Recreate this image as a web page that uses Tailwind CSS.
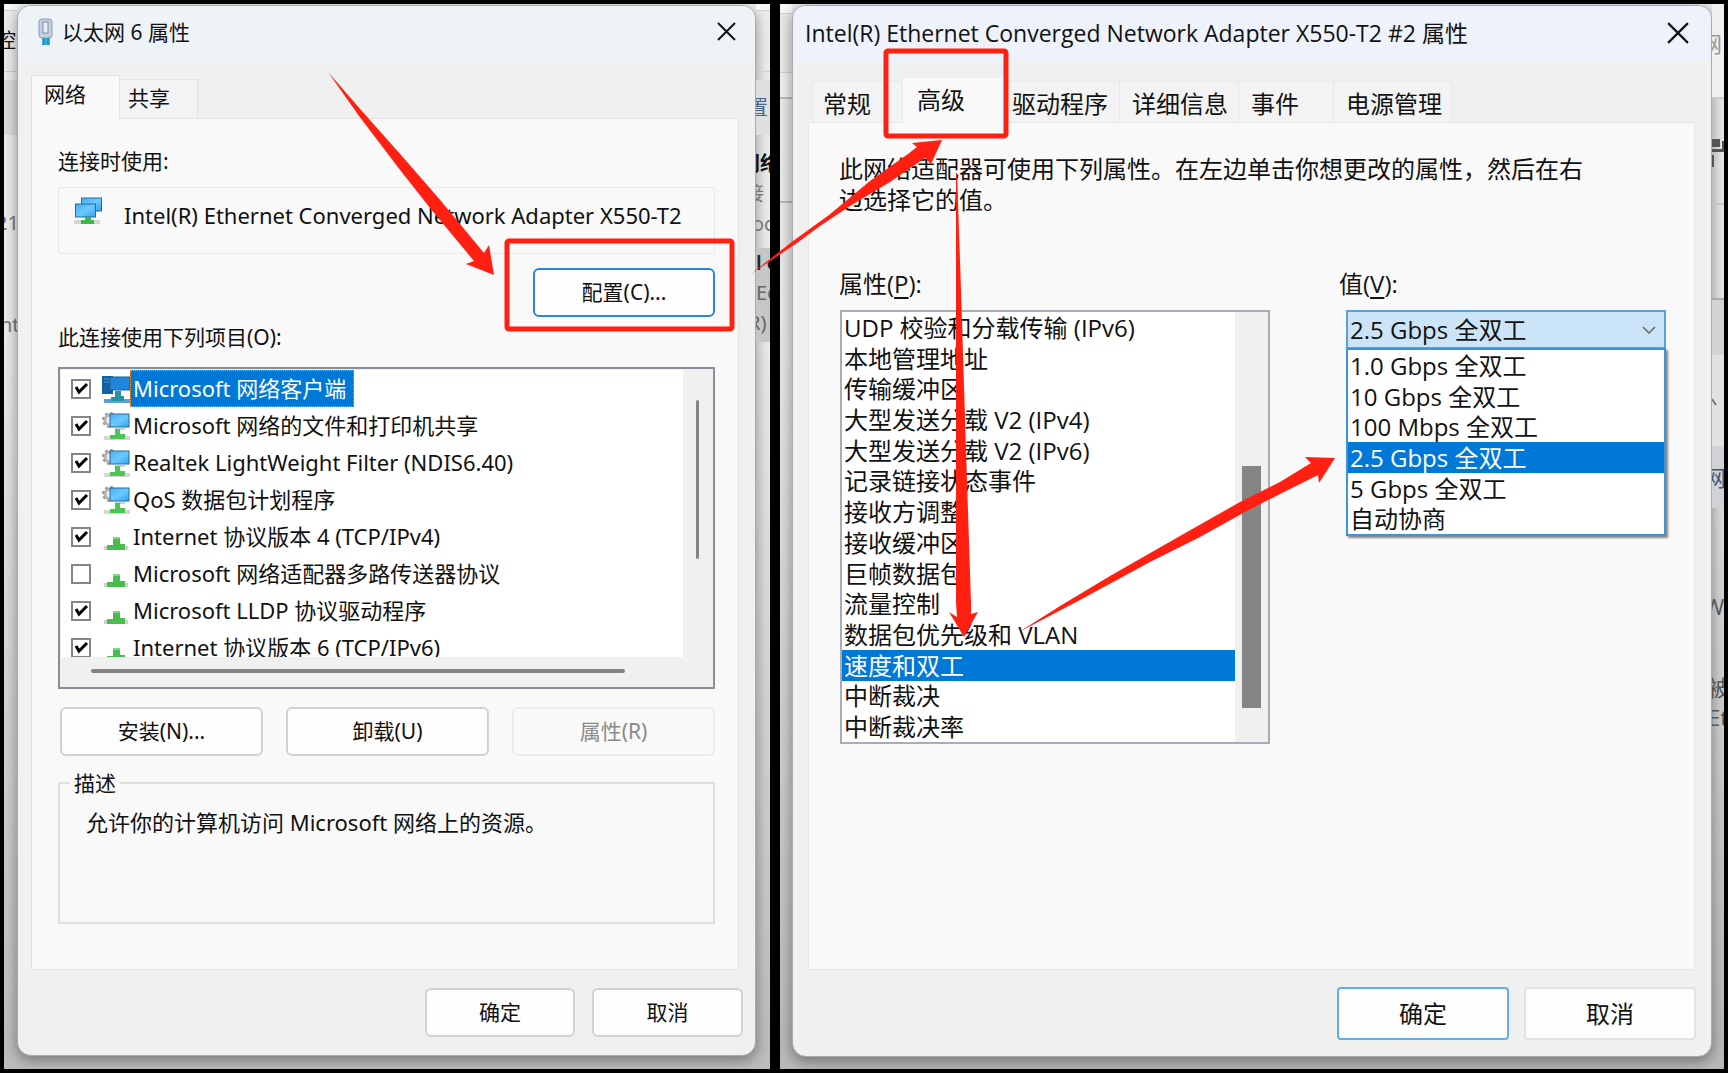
<!DOCTYPE html>
<html lang="zh-CN">
<head>
    <meta charset="UTF-8">
    <meta name="viewport" content="width=device-width, initial-scale=1.0">
    <title>以太网 6 属性</title>
    <script src="https://cdn.jsdelivr.net/npm/@tailwindcss/browser@4"></script>
    <style>
        body { font-family: 'Noto Sans', 'Noto Sans CJK SC', sans-serif; }
        .narrow { font-family: 'Open Sans', 'Noto Sans CJK SC', sans-serif; }
    </style>
</head>
<body class="bg-black text-[#111]">

    <!-- Shared icons -->
    <svg class="absolute size-0">
        <defs>
            <linearGradient id="screen" x1="0" y1="0" x2="1" y2="1">
                <stop offset="0" stop-color="#3fb0f5"/><stop offset=".5" stop-color="#6cc9ff"/><stop offset="1" stop-color="#2fa4f0"/>
            </linearGradient>
        </defs>
        <symbol id="adapter" viewBox="0 0 28 28">
            <rect x="7.500" y="1" width="20" height="13" fill="url(#screen)" stroke="#2b6c93"/>
            <rect x="1.500" y="7" width="20" height="13" fill="url(#screen)" stroke="#2b6c93"/>
            <path d="M0 23h26v4H0z" fill="#d5d5d5"/>
            <path d="M11 20h6v3h3v4H7v-4h4z" fill="#3fb845"/>
        </symbol>
        <symbol id="client" viewBox="0 0 28 28">
            <rect x="0" y="1" width="11" height="18" fill="#12609f"/>
            <path d="M2 4h6M2 7h6" stroke="#3aa0d8"/>
            <rect x="8" y="2" width="20" height="13" fill="#1f86dc" stroke="#165f9e"/>
            <path d="M2 24h26v4H2z" fill="#5d9fd8"/>
            <path d="M13 16h6v5h3v5H9v-4h4z" fill="#2592a4"/>
        </symbol>
        <symbol id="service" viewBox="0 0 28 28">
            <circle cx="8" cy="8" r="5" fill="#eee" stroke="#b5b5b5" stroke-width="3"/>
            <circle cx="8" cy="8" r="7" fill="none" stroke="#999" stroke-width="2" stroke-dasharray="3 2.500"/>
            <rect x="8" y="2" width="19" height="13" fill="url(#screen)" stroke="#2b6c93"/>
            <path d="M2 24h26v4H2z" fill="#d5d5d5"/>
            <path d="M13 17h10" stroke="#8aa3b8"/>
            <path d="M13 17h5v5h5v5H8v-4h5z" fill="#4cc552"/>
        </symbol>
        <symbol id="protocol" viewBox="0 0 28 28">
            <path d="M2 23h24v4H2z" fill="#cfcfcf"/>
            <path d="M11 14h7v7h5v6H5v-5h6z" fill="#48bd4d"/>
            <path d="M11 14h7v2h-7z" fill="#7fd883"/>
        </symbol>
    </svg>

    <div class="relative grid min-h-screen grid-cols-[766fr_944fr] gap-[10px] p-1">

        <!-- Left: connection properties -->
        <section class="grid grid-cols-[13px_1fr_14px] bg-linear-to-b from-[#ececec] from-30% to-[#bcbcbc] text-xl leading-[30px]">
            <div class="flex flex-col overflow-hidden whitespace-nowrap">
                <div class="h-[7px] border-b border-[#d0d0d0] bg-[#f6f6f6]"></div>
                <div class="flex h-[61px] items-center border-b border-[#d0d0d0]"><span class="-ml-2">控制</span></div>
                <div class="h-2"></div>
                <div class="h-[55px] bg-[#dcdee0]"></div>
                <div class="mt-[73px] text-[#777]"><span class="-ml-2">21</span></div>
                <div class="mt-[72px] text-[#777]"><span class="-ml-1">nt</span></div>
            </div>

            <main class="mt-px mb-[13px] flex flex-col overflow-hidden rounded-[14px] border border-[#aaa] bg-[#f0f0f0] text-[21px] shadow-[0_4px_14px_#0006]">
                <header class="flex h-[53px] items-center bg-[#eef3f8] pr-[18px] pb-0.5 pl-5">
                    <svg class="mr-2 h-7 w-4" viewBox="0 0 16 28">
                        <rect x="1" y="1" width="13" height="19" rx="3" fill="#c3cede" stroke="#8b9bb4"/>
                        <rect x="5" y="4" width="5" height="11" fill="#e9eff7" stroke="#7f8fab"/>
                        <path d="M4 20h8v7H4z" fill="#3bb0d8"/>
                        <path d="M6 20v7M10 20v7" stroke="#1878a8"/>
                    </svg>
                    <h1 class="flex-1">以太网 6 属性</h1>
                    <button aria-label="关闭"><svg class="size-5" viewBox="0 0 20 20" stroke="#111" stroke-width="2"><path d="M1 1l17 17M18 1L1 18"/></svg></button>
                </header>

                <div role="tablist" class="ml-[13px] flex h-[59px] items-end">
                    <button role="tab" aria-selected="true" class="z-10 -mb-px h-[44px] w-[89px] border border-b-0 border-[#e2e2e2] bg-[#f9f9f9] pb-2 pl-3 text-left">网络</button>
                    <button role="tab" aria-selected="false" class="h-[39px] w-[78px] border border-b-0 border-l-0 border-[#e2e2e2] bg-[#f3f3f3] pb-0.5 pl-2 text-left">共享</button>
                </div>

                <div role="tabpanel" class="mr-4 ml-[13px] flex flex-1 flex-col border border-[#e2e2e2] bg-[#f9f9f9] pt-[27px] pr-[23px] pb-[45px] pl-[26px]">
                    <p>连接时使用:</p>
                    <div class="mt-[11px] flex h-[67px] items-start rounded-xs border border-[#e8e8e8] pt-[9px] pl-[15px] text-[22px]">
                        <svg class="size-7"><use href="#adapter"/></svg>
                        <span class="ml-[22px] leading-9">Intel(R) Ethernet Converged Network Adapter X550-T2</span>
                    </div>
                    <button class="mt-[14px] h-[49px] w-[182px] self-end rounded-md border-2 border-[#2a86d6] bg-[#fdfdfd] pb-0.5">配置(C)...</button>
                    <p class="mt-[5px]">此连接使用下列项目(O):</p>

                    <div class="mt-[15px] h-[322px] border-2 border-[#8a9099] bg-[#f0f0f0] p-px">
                        <div class="flex">
                            <ul id="items" class="h-[287px] flex-1 overflow-hidden bg-white text-[22px]"></ul>
                            <div class="flex w-[29px] justify-center pt-[30px]"><div class="h-[159px] w-[3px] rounded-full bg-[#858585]"></div></div>
                        </div>
                        <div class="mt-3 mr-[87px] ml-[30px] h-1 rounded-full bg-[#858585]"></div>
                    </div>

                    <div class="mt-[18px] grid grid-cols-3 gap-[23px] pl-0.5">
                        <button class="h-[49px] rounded-md border-2 border-[#d2d2d2] bg-[#fdfdfd] pb-0.5">安装(N)...</button>
                        <button class="h-[49px] rounded-md border-2 border-[#d2d2d2] bg-[#fdfdfd] pb-0.5">卸载(U)</button>
                        <button disabled class="h-[49px] rounded-md border-2 border-[#ebebeb] bg-[#f9f9f9] pb-0.5 text-[#8a8a8a]">属性(R)</button>
                    </div>

                    <fieldset class="mt-3 h-[156px] border-2 border-[#e0e0e0] pt-[9px] pl-[26px]">
                        <legend class="-ml-4 px-1">描述</legend>
                        <p class="text-[22px]">允许你的计算机访问 Microsoft 网络上的资源。</p>
                    </fieldset>
                </div>

                <footer class="flex justify-end gap-[17px] pt-[18px] pr-3 pb-[18px]">
                    <button class="h-[49px] w-[150px] rounded-md border-2 border-[#d2d2d2] bg-[#fdfdfd] pb-0.5">确定</button>
                    <button class="h-[49px] w-[151px] rounded-md border-2 border-[#d2d2d2] bg-[#fdfdfd] pb-0.5">取消</button>
                </footer>
            </main>

            <div class="flex flex-col overflow-hidden whitespace-nowrap">
                <div class="h-[7px] border-b border-[#d0d0d0] bg-[#f6f6f6]"></div>
                <div class="h-[61px] border-b border-[#d0d0d0]"></div>
                <div class="h-2"></div>
                <div class="flex h-[55px] items-center bg-[#dcdee0] text-[#4a6486]"><span class="-ml-2">置</span></div>
                <div class="mt-[14px] font-semibold"><span class="-ml-4">网络</span></div>
                <div class="text-[#777]"><span class="-ml-3">接</span></div>
                <div class="text-[#777]"><span class="-ml-1">oc</span></div>
                <div class="mt-[9px] h-[94px] bg-[#c6c6c6] text-[#666]">
                    <div class="font-semibold text-[#222]">l e</div>
                    <div>Ee</div>
                    <div><span class="-ml-2">R)</span></div>
                </div>
            </div>
        </section>

        <!-- Right: adapter properties -->
        <section class="narrow grid grid-cols-[12px_1fr_12px] bg-linear-to-b from-[#e8e8e8] from-30% to-[#b8b8b8] text-[22px] leading-[30px]">
            <div class="flex flex-col">
                <div class="h-[10px] border-b border-[#d0d0d0] bg-[#f6f6f6]"></div>
                <div class="h-[59px] border-b border-[#d0d0d0]"></div>
                <div class="h-[26px] border-b-2 border-[#bbb] bg-[#f0f0f0]"></div>
                <div class="h-[104px] border-b-2 border-[#bbb]"></div>
            </div>

            <main class="mt-px mb-[12px] flex flex-col overflow-hidden rounded-[14px] border border-[#aaa] bg-[#f0f0f0] text-2xl leading-[31px] shadow-[0_4px_14px_#0006]">
                <header class="flex h-[56px] items-center bg-[#eef3fb] pr-[22px] pb-0.5 pl-3">
                    <h1 class="flex-1 text-[23px]">Intel(R) Ethernet Converged Network Adapter X550-T2 #2 属性</h1>
                    <button aria-label="关闭"><svg class="size-[22px]" viewBox="0 0 20 20" stroke="#111" stroke-width="2"><path d="M1 1l18 18M19 1L1 19"/></svg></button>
                </header>

                <div role="tablist" class="ml-[19px] flex h-[60px] items-end">
                    <button role="tab" aria-selected="false" class="h-[41px] w-[91px] border border-b-0 border-[#e8e8e8] bg-[#f3f3f3] pt-0.5 pl-[10px] text-left">常规</button>
                    <button role="tab" aria-selected="true" class="z-10 -mb-px h-[45px] w-[102px] bg-[#f9f9f9] pb-0.5 pl-[14px] text-left">高级</button>
                    <button role="tab" aria-selected="false" class="h-[41px] w-[115px] border border-b-0 border-[#e8e8e8] bg-[#f3f3f3] pt-0.5 pl-[6px] text-left">驱动程序</button>
                    <button role="tab" aria-selected="false" class="h-[41px] w-[119px] border border-b-0 border-l-0 border-[#e8e8e8] bg-[#f3f3f3] pt-0.5 pl-3 text-left">详细信息</button>
                    <button role="tab" aria-selected="false" class="h-[41px] w-[95px] border border-b-0 border-l-0 border-[#e8e8e8] bg-[#f3f3f3] pt-0.5 pl-3 text-left">事件</button>
                    <button role="tab" aria-selected="false" class="h-[41px] w-[118px] border border-b-0 border-l-0 border-[#e8e8e8] bg-[#f3f3f3] pt-0.5 pl-3 text-left">电源管理</button>
                </div>

                <div role="tabpanel" class="mr-4 ml-[15px] flex-1 border border-[#e8e8e8] bg-[#f9f9f9] pt-[30px] pl-[30px]">
                    <p class="max-w-[746px]">此网络适配器可使用下列属性。在左边单击你想更改的属性，然后在右边选择它的值。</p>
                    <div class="mt-[53px] flex">
                        <div>
                            <p id="propLabel">属性(<u class="underline-offset-4">P</u>):</p>
                            <div class="mt-[11px] ml-px flex h-[434px] w-[430px] border-2 border-[#a8adb5] bg-[#f0f0f0]">
                                <ul role="listbox" aria-labelledby="propLabel" class="grid flex-1 auto-rows-fr bg-white">
                                    <li class="flex items-center px-0.5">UDP 校验和分载传输 (IPv6)</li>
                                    <li class="flex items-center px-0.5">本地管理地址</li>
                                    <li class="flex items-center px-0.5">传输缓冲区</li>
                                    <li class="flex items-center px-0.5">大型发送分载 V2 (IPv4)</li>
                                    <li class="flex items-center px-0.5">大型发送分载 V2 (IPv6)</li>
                                    <li class="flex items-center px-0.5">记录链接状态事件</li>
                                    <li class="flex items-center px-0.5">接收方调整</li>
                                    <li class="flex items-center px-0.5">接收缓冲区</li>
                                    <li class="flex items-center px-0.5">巨帧数据包</li>
                                    <li class="flex items-center px-0.5">流量控制</li>
                                    <li class="flex items-center px-0.5">数据包优先级和 VLAN</li>
                                    <li class="flex items-center bg-[#0078d7] px-0.5 text-white">速度和双工</li>
                                    <li class="flex items-center px-0.5">中断裁决</li>
                                    <li class="flex items-center px-0.5">中断裁决率</li>
                                </ul>
                                <div class="w-[33px] pt-[154px] pl-[7px]"><div class="h-[242px] w-[19px] bg-[#858585]"></div></div>
                            </div>
                        </div>

                        <div class="ml-[69px]">
                            <label for="speed">值(<u class="underline-offset-4">V</u>):</label>
                            <div class="relative mt-[11px] ml-[7px] w-[320px]">
                                <select id="speed" class="block h-[39px] w-full appearance-none border-2 border-[#5b9fdf] bg-[#cce4f7] pl-0.5">
                                    <option>1.0 Gbps 全双工</option>
                                    <option>10 Gbps 全双工</option>
                                    <option>100 Mbps 全双工</option>
                                    <option selected>2.5 Gbps 全双工</option>
                                    <option>5 Gbps 全双工</option>
                                    <option>自动协商</option>
                                </select>
                                <svg class="pointer-events-none absolute top-4 right-[10px] h-2 w-[14px]" viewBox="0 0 14 8" fill="none" stroke="#666" stroke-width="1.500"><path d="M1 1l6 6 6-6"/></svg>
                                <ul role="listbox" class="absolute top-[38px] left-0 grid h-[188px] w-full auto-rows-fr border-2 border-[#3d94de] bg-white shadow-[2px_2px_2px_#0007]">
                                    <li class="flex items-center px-0.5">1.0 Gbps 全双工</li>
                                    <li class="flex items-center px-0.5">10 Gbps 全双工</li>
                                    <li class="flex items-center px-0.5">100 Mbps 全双工</li>
                                    <li class="flex items-center bg-[#0078d7] px-0.5 text-white">2.5 Gbps 全双工</li>
                                    <li class="flex items-center px-0.5">5 Gbps 全双工</li>
                                    <li class="flex items-center px-0.5">自动协商</li>
                                </ul>
                            </div>
                        </div>
                    </div>
                </div>

                <footer class="flex justify-end gap-[15px] pt-[17px] pr-[15px] pb-4">
                    <button class="h-[53px] w-[172px] rounded-sm border-2 border-[#64aee8] bg-[#fdfdfd]">确定</button>
                    <button class="h-[53px] w-[172px] rounded-sm border-2 border-[#e2e2e2] bg-[#fdfdfd]">取消</button>
                </footer>
            </main>

            <div class="flex flex-col overflow-hidden whitespace-nowrap text-[#555]">
                <div class="flex h-[95px] items-center border-b-2 border-[#ccc] bg-[#f0f0f0] pb-4 text-[#999]"><span class="-ml-3">网</span></div>
                <div class="h-[106px] border-b-2 border-[#c4c4c4] pt-[38px]">
                    <svg class="h-8 w-3" viewBox="0 0 12 32"><path d="M0 2h8v8H0zM0 12h12v3H0zM10 4h2v8h-2zM0 18h2v12H0z" fill="#555"/></svg>
                </div>
                <div class="h-[95px] border-b-2 border-[#aaa]"></div>
                <div class="h-[55px] bg-[#d4d4d4]"></div>
                <div class="h-[91px] bg-[#e2e2e2] pt-[42px]"><svg class="h-3 w-2" viewBox="0 0 8 12"><path d="M0 2l4 6" stroke="#777" stroke-width="2"/></svg></div>
                <div class="flex h-[62px] items-center bg-[#d0d2d6] text-[#3b5577]"><span class="-ml-2">网</span></div>
                <div class="mt-[83px]"><span class="-ml-2">W</span></div>
                <div class="mt-[51px]"><span class="-ml-1">被</span></div>
                <div><span class="-ml-1">Et</span></div>
            </div>
        </section>

        <!-- Red callouts -->
        <svg class="pointer-events-none absolute inset-0 z-20 h-full w-full" viewBox="0 0 1728 1073" preserveAspectRatio="none" fill="#ff2012">
            <g fill="none" stroke="#ff2012" stroke-width="5">
                <rect x="507" y="241" width="225" height="88" rx="2"/>
                <rect x="886" y="51" width="120" height="85" rx="2"/>
            </g>
            <path d="M328 72L361 110L401 155L441 201L484 253L489 245L494 275L466 264L474 261L430 208L397 166L359 116Z"/>
            <path d="M751 274L793 241L829 215L870 181L908 154L917 147L912 143L942 140L931 164L925 158L890 182L850 206L820 226L797 243Z"/>
            <path d="M956 173L957 173L961 290L966 450L971 603L971 614L978 612L964 637L949 612L957 617L956 603L956 290Z"/>
            <path d="M1019 632L1060 606L1110 576L1180 536L1240 502L1280 482L1311 463L1305 457L1335 458L1319 483L1318 475L1280 494L1245 512L1200 537L1150 562L1080 600Z"/>
        </svg>
    </div>

    <script>
      const items = [
        { icon: "client", name: "Microsoft 网络客户端", checked: true, selected: true },
        { icon: "service", name: "Microsoft 网络的文件和打印机共享", checked: true },
        { icon: "service", name: "Realtek LightWeight Filter (NDIS6.40)", checked: true },
        { icon: "service", name: "QoS 数据包计划程序", checked: true },
        { icon: "protocol", name: "Internet 协议版本 4 (TCP/IPv4)", checked: true },
        { icon: "protocol", name: "Microsoft 网络适配器多路传送器协议", checked: false },
        { icon: "protocol", name: "Microsoft LLDP 协议驱动程序", checked: true },
        { icon: "protocol", name: "Internet 协议版本 6 (TCP/IPv6)", checked: true }
      ];

      items.forEach(item => {
        const li = document.createElement("li");
        const nameClass = item.selected
          ? "h-[37px] bg-[#0078d7] text-white outline-1 -outline-offset-1 outline-dotted outline-[#ff9a3d] pl-[3px] pr-2 leading-[37px]"
          : "h-[37px] pl-[3px] leading-[37px]";
        li.innerHTML = `
          <label class="flex h-[37px] items-center whitespace-nowrap pl-[10px]">
            <span class="grid size-5">
              <input type="checkbox" ${item.checked ? "checked" : ""} class="peer size-5 appearance-none border-2 border-[#858585] bg-white [grid-area:1/1]">
              <svg class="invisible size-5 peer-checked:visible [grid-area:1/1]" viewBox="0 0 20 20" fill="none" stroke="#000" stroke-width="3"><path d="M5 8l3 5 8-8"/></svg>
            </span>
            <svg class="ml-[11px] size-7"><use href="#${item.icon}"/></svg>
            <span class="${nameClass}">${item.name}</span>
          </label>`;
        document.getElementById("items").appendChild(li);
      });
    </script>
</body>
</html>
